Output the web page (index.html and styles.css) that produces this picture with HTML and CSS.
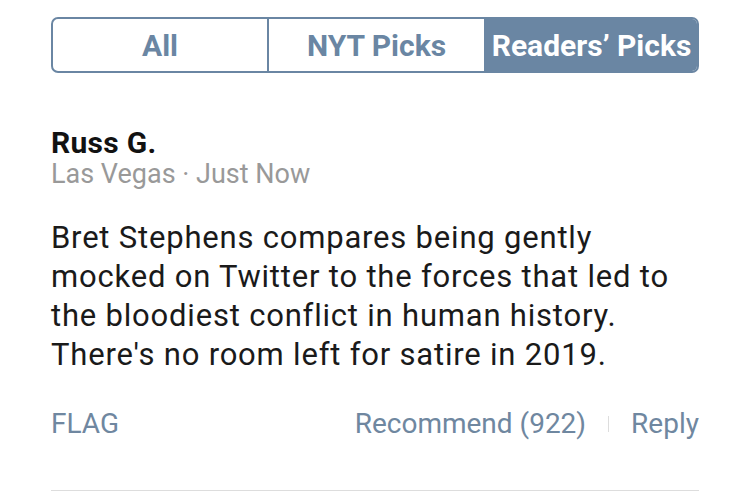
FILE: index.html
```html
<!DOCTYPE html>
<html>
<head>
<meta charset="utf-8">
<link rel="stylesheet" href="styles.css">
</head>
<body>
<div class="page">
  <div class="tabs">
    <div class="tab">All</div>
    <div class="tab">NYT Picks</div>
    <div class="tab active">Readers’ Picks</div>
  </div>
  <div class="comment">
    <div class="name">Russ G.</div>
    <div class="meta">Las Vegas · Just Now</div>
    <p class="body">Bret Stephens compares being gently mocked on Twitter to the forces that led to the bloodiest conflict in human history. There's no room left for satire in 2019.</p>
    <div class="actions">
      <span class="flag">FLAG</span>
      <div class="right">
        <span>Recommend (922)</span>
        <span class="sep"></span>
        <span>Reply</span>
      </div>
    </div>
  </div>
  <div class="rule"></div>
</div>
</body>
</html>
```
FILE: styles.css
```css
html, body { margin: 0; padding: 0; background: #fff; }
body { font-family: Roboto, "Liberation Sans", sans-serif; }
.page { padding: 17px 50px 0 51px; }
.tabs {
  display: grid;
  grid-template-columns: 214px 217px 1fr;
  height: 56px;
  border: 2px solid #6a86a3;
  border-radius: 7px;
  overflow: hidden;
  box-sizing: border-box;
}
.tab {
  display: flex; align-items: center; justify-content: center;
  font-weight: bold; font-size: 30px; color: #6a86a3;
}
.tab + .tab { border-left: 2px solid #6a86a3; }
.tab.active { background: #6a86a3; color: #fff; }
.comment { padding-top: 54px; }
.name { font-weight: bold; font-size: 30px; color: #121212; line-height: 32px; letter-spacing: 0.3px; }
.meta { font-size: 27px; color: #999; line-height: 30px; }
.body { margin: 29px 0 0; font-size: 31px; line-height: 39px; color: #1a1a1a; letter-spacing: 0.8px; }
.actions { display: flex; justify-content: space-between; align-items: center; margin-top: 35px; font-size: 28px; line-height: 30px; color: #6f87a0; }
.right { display: flex; align-items: center; gap: 22px; }
.sep { width: 1px; height: 16px; background: #ddd; }
.rule { margin-top: 51px; height: 1px; background: #ddd; }
```
